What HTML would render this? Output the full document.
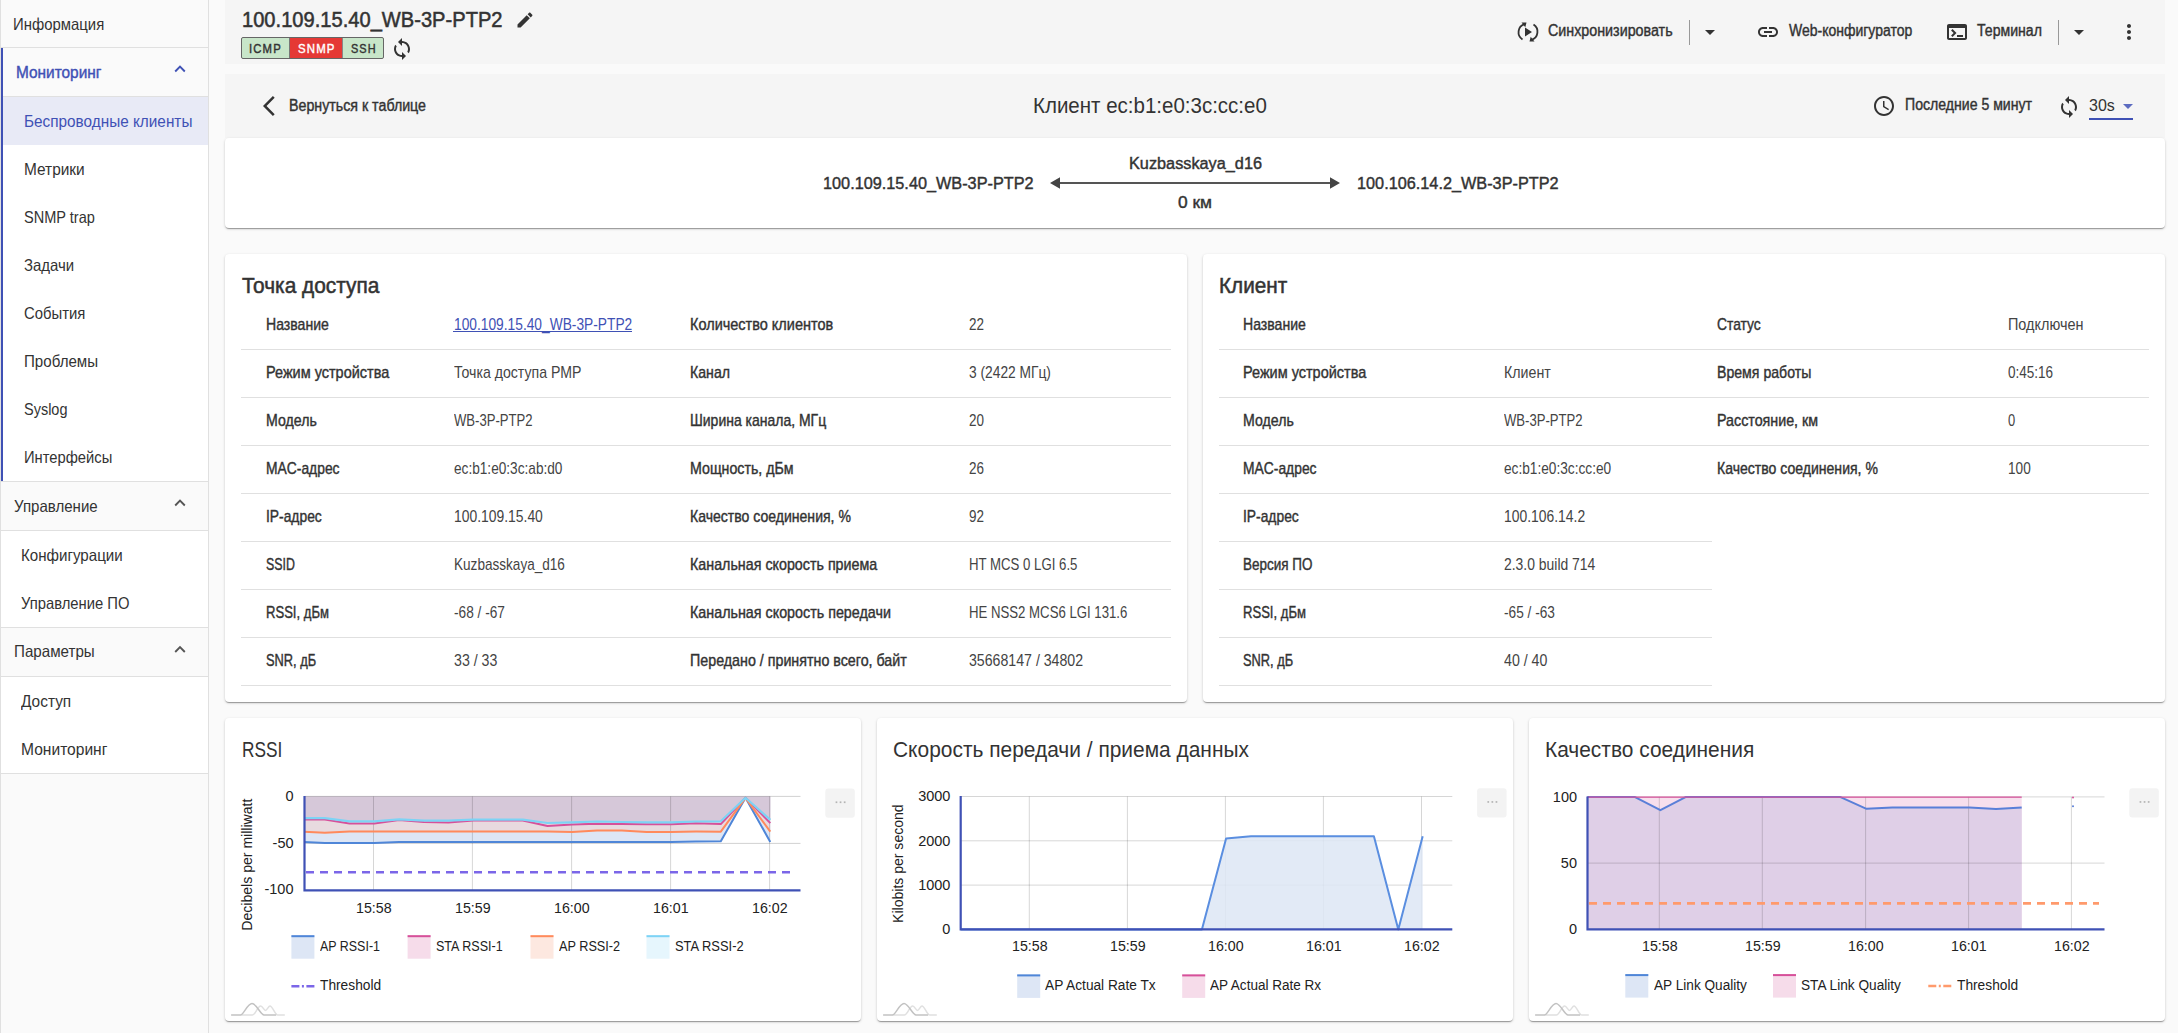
<!DOCTYPE html>
<html><head><meta charset="utf-8"><title>Client</title>
<style>
html,body{margin:0;padding:0;}
body{width:2178px;height:1033px;overflow:hidden;position:relative;background:#fafafa;font-family:"Liberation Sans",sans-serif;}
.t{position:absolute;white-space:pre;line-height:1;transform-origin:0 0;}
.card{position:absolute;background:#fff;border-radius:4px;box-shadow:0 2px 1px -1px rgba(0,0,0,.2),0 1px 1px 0 rgba(0,0,0,.14),0 1px 3px 0 rgba(0,0,0,.12);}
svg{overflow:visible}
</style></head><body>
<div style="position:absolute;left:0;top:0;width:208px;height:1033px;background:#fafafa;border-left:1px solid #e0e0e0;box-sizing:border-box;"></div>
<div style="position:absolute;left:208px;top:0;width:1px;height:1033px;background:#e0e0e0;"></div>
<div style="position:absolute;left:3px;top:97px;width:205px;height:384px;background:#fff;"></div>
<div style="position:absolute;left:1px;top:531px;width:207px;height:96px;background:#fff;"></div>
<div style="position:absolute;left:1px;top:677px;width:207px;height:96px;background:#fff;"></div>
<div style="position:absolute;left:3px;top:97px;width:205px;height:48px;background:#e8eaf6;"></div>
<div style="position:absolute;left:1px;top:47px;width:207px;height:1px;background:#e0e0e0;"></div>
<div style="position:absolute;left:1px;top:96px;width:207px;height:1px;background:#e0e0e0;"></div>
<div style="position:absolute;left:1px;top:481px;width:207px;height:1px;background:#e0e0e0;"></div>
<div style="position:absolute;left:1px;top:530px;width:207px;height:1px;background:#e0e0e0;"></div>
<div style="position:absolute;left:1px;top:627px;width:207px;height:1px;background:#e0e0e0;"></div>
<div style="position:absolute;left:1px;top:676px;width:207px;height:1px;background:#e0e0e0;"></div>
<div style="position:absolute;left:1px;top:773px;width:207px;height:1px;background:#e0e0e0;"></div>
<div style="position:absolute;left:1px;top:48px;width:2px;height:433px;background:#3f51b5;"></div>
<div style="position:absolute;left:225px;top:0;width:1940px;height:64px;background:#f5f5f5;"></div>
<div style="position:absolute;left:225px;top:74px;width:1940px;height:64px;background:#f5f5f5;"></div>
<div style="position:absolute;left:241px;top:37px;width:143px;height:22px;box-sizing:border-box;border:1px solid #666;border-radius:2px;background:#c8e6c9;overflow:hidden;"><div style="position:absolute;left:47px;top:0;width:53px;height:20px;background:#e53935;"></div><div style="position:absolute;left:47px;top:0;width:1px;height:20px;background:#777;"></div><div style="position:absolute;left:100px;top:0;width:1px;height:20px;background:#888;"></div></div>
<div style="position:absolute;left:1689px;top:20px;width:1px;height:25px;background:#999;"></div>
<div style="position:absolute;left:2058px;top:20px;width:1px;height:25px;background:#999;"></div>
<div style="position:absolute;left:2089px;top:118px;width:44px;height:2px;background:#3f51b5;"></div>
<div style="position:absolute;left:225px;top:138px;width:1940px;height:90px;background:#fff;border-radius:4px;box-shadow:0 2px 1px -1px rgba(0,0,0,.2),0 1px 1px 0 rgba(0,0,0,.14),0 1px 3px 0 rgba(0,0,0,.17);"></div>
<div style="position:absolute;left:225px;top:254px;width:962px;height:448px;background:#fff;border-radius:4px;box-shadow:0 2px 1px -1px rgba(0,0,0,.2),0 1px 1px 0 rgba(0,0,0,.14),0 1px 3px 0 rgba(0,0,0,.17);"></div>
<div style="position:absolute;left:241px;top:349px;width:930px;height:1px;background:#e0e0e0;"></div>
<div style="position:absolute;left:241px;top:397px;width:930px;height:1px;background:#e0e0e0;"></div>
<div style="position:absolute;left:241px;top:445px;width:930px;height:1px;background:#e0e0e0;"></div>
<div style="position:absolute;left:241px;top:493px;width:930px;height:1px;background:#e0e0e0;"></div>
<div style="position:absolute;left:241px;top:541px;width:930px;height:1px;background:#e0e0e0;"></div>
<div style="position:absolute;left:241px;top:589px;width:930px;height:1px;background:#e0e0e0;"></div>
<div style="position:absolute;left:241px;top:637px;width:930px;height:1px;background:#e0e0e0;"></div>
<div style="position:absolute;left:241px;top:685px;width:930px;height:1px;background:#e0e0e0;"></div>
<div style="position:absolute;left:453px;top:331px;width:179px;height:1px;background:#3f51b5;"></div>
<div style="position:absolute;left:1203px;top:254px;width:962px;height:448px;background:#fff;border-radius:4px;box-shadow:0 2px 1px -1px rgba(0,0,0,.2),0 1px 1px 0 rgba(0,0,0,.14),0 1px 3px 0 rgba(0,0,0,.17);"></div>
<div style="position:absolute;left:1219px;top:349px;width:930px;height:1px;background:#e0e0e0;"></div>
<div style="position:absolute;left:1219px;top:397px;width:930px;height:1px;background:#e0e0e0;"></div>
<div style="position:absolute;left:1219px;top:445px;width:930px;height:1px;background:#e0e0e0;"></div>
<div style="position:absolute;left:1219px;top:493px;width:930px;height:1px;background:#e0e0e0;"></div>
<div style="position:absolute;left:1219px;top:541px;width:493px;height:1px;background:#e0e0e0;"></div>
<div style="position:absolute;left:1219px;top:589px;width:493px;height:1px;background:#e0e0e0;"></div>
<div style="position:absolute;left:1219px;top:637px;width:493px;height:1px;background:#e0e0e0;"></div>
<div style="position:absolute;left:1219px;top:685px;width:493px;height:1px;background:#e0e0e0;"></div>
<div style="position:absolute;left:225px;top:718px;width:636px;height:303px;background:#fff;border-radius:4px;box-shadow:0 2px 1px -1px rgba(0,0,0,.2),0 1px 1px 0 rgba(0,0,0,.14),0 1px 3px 0 rgba(0,0,0,.17);"></div>
<div style="position:absolute;left:877px;top:718px;width:636px;height:303px;background:#fff;border-radius:4px;box-shadow:0 2px 1px -1px rgba(0,0,0,.2),0 1px 1px 0 rgba(0,0,0,.14),0 1px 3px 0 rgba(0,0,0,.17);"></div>
<div style="position:absolute;left:1529px;top:718px;width:636px;height:303px;background:#fff;border-radius:4px;box-shadow:0 2px 1px -1px rgba(0,0,0,.2),0 1px 1px 0 rgba(0,0,0,.14),0 1px 3px 0 rgba(0,0,0,.17);"></div>
<svg style="position:absolute;left:0;top:0" width="2178" height="1033" viewBox="0 0 2178 1033">
<path d="M175.2,71.5 L180,66.7 L184.8,71.5" fill="none" stroke="#3f51b5" stroke-width="1.9"/>
<path d="M175.2,505.5 L180,500.7 L184.8,505.5" fill="none" stroke="#555" stroke-width="1.9"/>
<path d="M175.2,652.0 L180,647.2 L184.8,652.0" fill="none" stroke="#555" stroke-width="1.9"/>
<g fill="none" stroke="#333" stroke-width="1.8"><path d="M1522.5,39.5 A8.5,8.5 0 0 1 1524.5,24.2"/><path d="M1533.5,24.5 A8.5,8.5 0 0 1 1531.5,39.8"/></g><path fill="#333" d="M1521.5,22.5 l5,0 l-1.2,4.8z M1534.5,41.5 l-5,0 l1.2,-4.8z M1525,27.5 l0,9 l7,-4.5z"/>
<line x1="1058" y1="183" x2="1332" y2="183" stroke="#555" stroke-width="2"/><path fill="#444" d="M1050,183 L1060,177.2 L1060,188.8z M1340,183 L1330,177.2 L1330,188.8z"/>
<defs><clipPath id="c1"><rect x="304.5" y="793.4" width="496.0" height="96.89999999999998"/></clipPath><clipPath id="c3"><rect x="1587.5" y="793" width="517" height="137"/></clipPath></defs>
<polygon points="300.0,796.4 300.0,841.7 324.8,842.9 349.5,842.9 374.3,842.9 399.0,842.0 423.8,842.0 448.5,842.0 473.3,842.0 498.0,842.0 522.8,842.0 547.5,842.0 572.3,842.0 597.0,842.0 621.8,842.0 646.5,842.0 671.3,842.0 696.0,841.5 720.8,841.2 745.5,797.8 770.3,841.9 770.3,796.4" fill="#dde6f5" clip-path="url(#c1)"/>
<polygon points="300.0,796.4 300.0,831.6 324.8,832.7 349.5,831.6 374.3,831.6 399.0,831.6 423.8,831.6 448.5,831.6 473.3,831.6 498.0,831.6 522.8,831.6 547.5,831.6 572.3,832.0 597.0,830.5 621.8,830.5 646.5,832.0 671.3,832.0 696.0,831.6 720.8,831.7 745.5,797.8 770.3,831.7 770.3,796.4" fill="#e8dadf" clip-path="url(#c1)"/>
<polygon points="300.0,796.4 300.0,818.2 324.8,818.2 349.5,821.4 374.3,821.4 399.0,819.4 423.8,820.6 448.5,820.6 473.3,819.6 498.0,819.6 522.8,819.6 547.5,823.0 572.3,822.3 597.0,821.5 621.8,822.0 646.5,822.3 671.3,822.3 696.0,821.5 720.8,821.3 745.5,797.8 770.3,819.9 770.3,796.4" fill="#d6c8d9" clip-path="url(#c1)"/>
<line x1="304.5" y1="796.4" x2="800.5" y2="796.4" stroke="rgba(0,0,0,0.18)" stroke-width="1"/>
<line x1="304.5" y1="843.4" x2="800.5" y2="843.4" stroke="rgba(0,0,0,0.18)" stroke-width="1"/>
<line x1="373.5" y1="796.4" x2="373.5" y2="890.3" stroke="rgba(0,0,0,0.16)" stroke-width="1"/>
<line x1="472.4" y1="796.4" x2="472.4" y2="890.3" stroke="rgba(0,0,0,0.16)" stroke-width="1"/>
<line x1="571.6" y1="796.4" x2="571.6" y2="890.3" stroke="rgba(0,0,0,0.16)" stroke-width="1"/>
<line x1="670.6" y1="796.4" x2="670.6" y2="890.3" stroke="rgba(0,0,0,0.16)" stroke-width="1"/>
<line x1="769.6" y1="796.4" x2="769.6" y2="890.3" stroke="rgba(0,0,0,0.16)" stroke-width="1"/>
<polyline points="300.0,841.7 324.8,842.9 349.5,842.9 374.3,842.9 399.0,842.0 423.8,842.0 448.5,842.0 473.3,842.0 498.0,842.0 522.8,842.0 547.5,842.0 572.3,842.0 597.0,842.0 621.8,842.0 646.5,842.0 671.3,842.0 696.0,841.5 720.8,841.2 745.5,797.8 770.3,841.9" fill="none" stroke="#4f86d8" stroke-width="2" stroke-linejoin="round" clip-path="url(#c1)"/>
<polyline points="300.0,819.6 324.8,819.6 349.5,823.4 374.3,823.4 399.0,819.9 423.8,822.0 448.5,822.6 473.3,820.6 498.0,820.6 522.8,820.6 547.5,826.0 572.3,824.6 597.0,823.8 621.8,824.0 646.5,824.3 671.3,824.3 696.0,823.2 720.8,824.1 745.5,797.8 770.3,823.1" fill="none" stroke="#d6509a" stroke-width="2" stroke-linejoin="round" clip-path="url(#c1)"/>
<polyline points="300.0,831.6 324.8,832.7 349.5,831.6 374.3,831.6 399.0,831.6 423.8,831.6 448.5,831.6 473.3,831.6 498.0,831.6 522.8,831.6 547.5,831.6 572.3,832.0 597.0,830.5 621.8,830.5 646.5,832.0 671.3,832.0 696.0,831.6 720.8,831.7 745.5,797.8 770.3,831.7" fill="none" stroke="#ff8a5c" stroke-width="2" stroke-linejoin="round" clip-path="url(#c1)"/>
<polyline points="300.0,818.2 324.8,818.2 349.5,821.4 374.3,821.4 399.0,819.4 423.8,820.6 448.5,820.6 473.3,819.6 498.0,819.6 522.8,819.6 547.5,823.0 572.3,822.3 597.0,821.5 621.8,822.0 646.5,822.3 671.3,822.3 696.0,821.5 720.8,821.3 745.5,797.8 770.3,819.9" fill="none" stroke="#7dd3f5" stroke-width="2.2" stroke-linejoin="round" clip-path="url(#c1)"/>
<line x1="306" y1="872.2" x2="790" y2="872.2" stroke="#7b66e8" stroke-width="2.6" stroke-dasharray="8 6"/>
<path d="M304.5,795.9 L304.5,890.3 L800.5,890.3" fill="none" stroke="#3f51b5" stroke-width="2.2"/>
<rect x="291.4" y="935.2" width="23" height="23.5" fill="#dde6f5"/><rect x="291.4" y="935.2" width="23" height="2" fill="#4f86d8"/>
<rect x="407.6" y="935.2" width="23" height="23.5" fill="#f6dcea"/><rect x="407.6" y="935.2" width="23" height="2" fill="#d6509a"/>
<rect x="530.5" y="935.2" width="23" height="23.5" fill="#fde8e0"/><rect x="530.5" y="935.2" width="23" height="2" fill="#ff8a5c"/>
<rect x="646.5" y="935.2" width="23" height="23.5" fill="#e6f6fd"/><rect x="646.5" y="935.2" width="23" height="2" fill="#7dd3f5"/>
<path d="M291.4,986.2 h8 M301.9,986.2 h2 M306.4,986.2 h8" stroke="#7b66e8" stroke-width="2.5" fill="none"/>
<rect x="825.3" y="788.6" width="29.5" height="29.2" rx="3" fill="#f3f3f3"/>
<rect x="835.6" y="801.4" width="1.7" height="1.7" fill="#b4b4b4"/>
<rect x="839.7" y="801.4" width="1.7" height="1.7" fill="#b4b4b4"/>
<rect x="843.8" y="801.4" width="1.7" height="1.7" fill="#b4b4b4"/>
<g transform="translate(0.0,0.0)" fill="none" stroke-width="1.5"><path stroke="#e0e0e0" d="M240.5,1014.9 H252.4 C255.5,1014.9 257.5,1006 260.7,1006 C262.5,1006 264,1010.4 265.4,1010.4 C267,1010.4 268.5,1006 270,1006 C272.5,1006 275,1014.9 277.5,1014.9 H284.8"/><path stroke="#c2c2c2" d="M231.1,1014.9 H240.5 C243.5,1014.9 247.5,1003.5 252,1003.5 C256.5,1003.5 260.5,1014.9 264,1014.9 H276.2"/></g>
<line x1="960.7" y1="796.5" x2="1452.3" y2="796.5" stroke="rgba(0,0,0,0.16)" stroke-width="1"/>
<line x1="960.7" y1="840.8" x2="1452.3" y2="840.8" stroke="rgba(0,0,0,0.16)" stroke-width="1"/>
<line x1="960.7" y1="885.1" x2="1452.3" y2="885.1" stroke="rgba(0,0,0,0.16)" stroke-width="1"/>
<line x1="1029.3" y1="796.5" x2="1029.3" y2="929.4" stroke="rgba(0,0,0,0.16)" stroke-width="1"/>
<line x1="1127.4" y1="796.5" x2="1127.4" y2="929.4" stroke="rgba(0,0,0,0.16)" stroke-width="1"/>
<line x1="1225.4" y1="796.5" x2="1225.4" y2="929.4" stroke="rgba(0,0,0,0.16)" stroke-width="1"/>
<line x1="1323.4" y1="796.5" x2="1323.4" y2="929.4" stroke="rgba(0,0,0,0.16)" stroke-width="1"/>
<line x1="1421.5" y1="796.5" x2="1421.5" y2="929.4" stroke="rgba(0,0,0,0.16)" stroke-width="1"/>
<polygon points="960.7,929.4 1201.9,929.4 1226.1,838.4 1251.0,836.3 1373.9,836.3 1398.3,929.4 1422.7,836.3 1422.7,929.4" fill="#dde6f5" fill-opacity="0.85"/>
<polyline points="960.7,929.4 1201.9,929.4 1226.1,838.4 1251.0,836.3 1373.9,836.3 1398.3,929.4 1422.7,836.3" fill="none" stroke="#5a8ee0" stroke-width="2" stroke-linejoin="round"/>
<path d="M960.7,796.0 L960.7,929.4 L1452.3,929.4" fill="none" stroke="#3f51b5" stroke-width="2.2"/>
<rect x="1017.2" y="974.4" width="23" height="23.5" fill="#dde6f5"/><rect x="1017.2" y="974.4" width="23" height="2" fill="#4f86d8"/>
<rect x="1182.2" y="974.4" width="23" height="23.5" fill="#f6dcea"/><rect x="1182.2" y="974.4" width="23" height="2" fill="#d6509a"/>
<rect x="1477.1" y="788.3" width="29.5" height="29.2" rx="3" fill="#f3f3f3"/>
<rect x="1487.4" y="801.1" width="1.7" height="1.7" fill="#b4b4b4"/>
<rect x="1491.5" y="801.1" width="1.7" height="1.7" fill="#b4b4b4"/>
<rect x="1495.6" y="801.1" width="1.7" height="1.7" fill="#b4b4b4"/>
<g transform="translate(652.0,0.0)" fill="none" stroke-width="1.5"><path stroke="#e0e0e0" d="M240.5,1014.9 H252.4 C255.5,1014.9 257.5,1006 260.7,1006 C262.5,1006 264,1010.4 265.4,1010.4 C267,1010.4 268.5,1006 270,1006 C272.5,1006 275,1014.9 277.5,1014.9 H284.8"/><path stroke="#c2c2c2" d="M231.1,1014.9 H240.5 C243.5,1014.9 247.5,1003.5 252,1003.5 C256.5,1003.5 260.5,1014.9 264,1014.9 H276.2"/></g>
<rect x="1587.5" y="796.9" width="434.20000000000005" height="132.5" fill="#f7dfed"/>
<polygon points="1587.5,796.9 1634.6,796.9 1660.4,810.2 1686.0,796.9 1840.0,796.9 1866.5,808.8 1892.3,807.5 1918.0,807.5 1944.0,807.5 1969.5,807.5 1996.0,809.1 2021.7,807.4 2021.7,929.4 1587.5,929.4" fill="#dfcfe7"/>
<line x1="1587.5" y1="796.9" x2="2104.5" y2="796.9" stroke="rgba(0,0,0,0.16)" stroke-width="1"/>
<line x1="1587.5" y1="863.1" x2="2104.5" y2="863.1" stroke="rgba(0,0,0,0.16)" stroke-width="1"/>
<line x1="1659.3" y1="796.9" x2="1659.3" y2="929.4" stroke="rgba(0,0,0,0.16)" stroke-width="1"/>
<line x1="1762.3" y1="796.9" x2="1762.3" y2="929.4" stroke="rgba(0,0,0,0.16)" stroke-width="1"/>
<line x1="1865.6" y1="796.9" x2="1865.6" y2="929.4" stroke="rgba(0,0,0,0.16)" stroke-width="1"/>
<line x1="1968.6" y1="796.9" x2="1968.6" y2="929.4" stroke="rgba(0,0,0,0.16)" stroke-width="1"/>
<line x1="2071.4" y1="796.9" x2="2071.4" y2="929.4" stroke="rgba(0,0,0,0.16)" stroke-width="1"/>
<polyline points="1587.5,796.9 1634.6,796.9 1660.4,810.2 1686.0,796.9 1840.0,796.9 1866.5,808.8 1892.3,807.5 1918.0,807.5 1944.0,807.5 1969.5,807.5 1996.0,809.1 2021.7,807.4" fill="none" stroke="#5a7fd8" stroke-width="2" stroke-linejoin="round"/>
<line x1="1587.5" y1="797.1" x2="2021.7" y2="797.1" stroke="#d6509a" stroke-width="1.4"/>
<line x1="1589" y1="903.4" x2="2099" y2="903.4" stroke="#ff9a6c" stroke-width="2.6" stroke-dasharray="8 6"/>
<circle cx="2073" cy="797.5" r="1" fill="#d6509a"/><circle cx="2073" cy="806.2" r="1" fill="#5a7fd8"/>
<path d="M1587.5,796.4 L1587.5,929.4 L2104.5,929.4" fill="none" stroke="#3f51b5" stroke-width="2.2"/>
<rect x="1625.3" y="974.1" width="23" height="23.5" fill="#dde6f5"/><rect x="1625.3" y="974.1" width="23" height="2" fill="#4f86d8"/>
<rect x="1773.0" y="974.1" width="23" height="23.5" fill="#f6dcea"/><rect x="1773.0" y="974.1" width="23" height="2" fill="#d6509a"/>
<path d="M1928.3,985.9 h8 M1938.8,985.9 h2 M1943.3,985.9 h8" stroke="#ff9a6c" stroke-width="2.5" fill="none"/>
<rect x="2129.3" y="788.3" width="29.5" height="29.2" rx="3" fill="#f3f3f3"/>
<rect x="2139.6" y="801.1" width="1.7" height="1.7" fill="#b4b4b4"/>
<rect x="2143.7" y="801.1" width="1.7" height="1.7" fill="#b4b4b4"/>
<rect x="2147.8" y="801.1" width="1.7" height="1.7" fill="#b4b4b4"/>
<g transform="translate(1304.0,0.0)" fill="none" stroke-width="1.5"><path stroke="#e0e0e0" d="M240.5,1014.9 H252.4 C255.5,1014.9 257.5,1006 260.7,1006 C262.5,1006 264,1010.4 265.4,1010.4 C267,1010.4 268.5,1006 270,1006 C272.5,1006 275,1014.9 277.5,1014.9 H284.8"/><path stroke="#c2c2c2" d="M231.1,1014.9 H240.5 C243.5,1014.9 247.5,1003.5 252,1003.5 C256.5,1003.5 260.5,1014.9 264,1014.9 H276.2"/></g>
</svg>
<div class="t" style="left:13.30px;top:16.03px;font-size:16.5px;color:#333;transform:scaleX(0.9028);">Информация</div>
<div class="t" style="left:15.70px;top:64.03px;font-size:16.5px;color:#3f51b5;transform:scaleX(0.9334);-webkit-text-stroke:0.42px #3f51b5;">Мониторинг</div>
<div class="t" style="left:23.50px;top:112.93px;font-size:16.5px;color:#3f51b5;transform:scaleX(0.9291);">Беспроводные клиенты</div>
<div class="t" style="left:23.50px;top:160.93px;font-size:16.5px;color:#333;transform:scaleX(0.9349);">Метрики</div>
<div class="t" style="left:23.50px;top:208.93px;font-size:16.5px;color:#333;transform:scaleX(0.8819);">SNMP trap</div>
<div class="t" style="left:23.50px;top:256.93px;font-size:16.5px;color:#333;transform:scaleX(0.9062);">Задачи</div>
<div class="t" style="left:23.50px;top:304.93px;font-size:16.5px;color:#333;transform:scaleX(0.9001);">События</div>
<div class="t" style="left:23.50px;top:352.93px;font-size:16.5px;color:#333;transform:scaleX(0.9156);">Проблемы</div>
<div class="t" style="left:23.50px;top:400.93px;font-size:16.5px;color:#333;transform:scaleX(0.8781);">Syslog</div>
<div class="t" style="left:23.50px;top:448.93px;font-size:16.5px;color:#333;transform:scaleX(0.8938);">Интерфейсы</div>
<div class="t" style="left:13.50px;top:497.73px;font-size:16.5px;color:#333;transform:scaleX(0.9124);">Управление</div>
<div class="t" style="left:21.30px;top:546.93px;font-size:16.5px;color:#333;transform:scaleX(0.9162);">Конфигурации</div>
<div class="t" style="left:21.30px;top:595.03px;font-size:16.5px;color:#333;transform:scaleX(0.8960);">Управление ПО</div>
<div class="t" style="left:13.50px;top:643.43px;font-size:16.5px;color:#333;transform:scaleX(0.9176);">Параметры</div>
<div class="t" style="left:21.30px;top:692.63px;font-size:16.5px;color:#333;transform:scaleX(0.9347);">Доступ</div>
<div class="t" style="left:21.30px;top:740.63px;font-size:16.5px;color:#333;transform:scaleX(0.9443);">Мониторинг</div>
<div class="t" style="left:241.90px;top:8.60px;font-size:22.2px;color:#333;transform:scaleX(0.9066);-webkit-text-stroke:0.53px #333;">100.109.15.40_WB-3P-PTP2</div>
<svg style="position:absolute;left:514.8px;top:10.1px;" width="20" height="20" viewBox="0 0 24 24"><path fill="#333" d="M3 17.25V21h3.75L17.81 9.94l-3.75-3.75L3 17.25zM20.71 7.04c.39-.39.39-1.02 0-1.41l-2.34-2.34c-.39-.39-1.02-.39-1.41 0l-1.83 1.83 3.75 3.75 1.83-1.83z"/></svg>
<div class="t" style="left:249.30px;top:43.24px;font-size:12.0px;color:#333;transform:scaleX(0.9435);letter-spacing:1.2px;-webkit-text-stroke:0.40px #333;">ICMP</div>
<div class="t" style="left:297.80px;top:43.24px;font-size:12.0px;color:#fff;transform:scaleX(0.9509);letter-spacing:1.2px;-webkit-text-stroke:0.40px #fff;">SNMP</div>
<div class="t" style="left:350.50px;top:43.24px;font-size:12.0px;color:#333;transform:scaleX(0.9091);letter-spacing:1.2px;-webkit-text-stroke:0.40px #333;">SSH</div>
<svg style="position:absolute;left:389.5px;top:36.5px;" width="24" height="24" viewBox="0 0 24 24"><path fill="#333" d="M12 4V1L8 5l4 4V6c3.31 0 6 2.69 6 6 0 1.010-.25 1.97-.7 2.8l1.46 1.46C19.54 15.03 20 13.57 20 12c0-4.42-3.58-8-8-8zm0 14c-3.31 0-6-2.69-6-6 0-1.01.25-1.97.7-2.8L5.24 7.74C4.46 8.97 4 10.43 4 12c0 4.42 3.58 8 8 8v3l4-4-4-4v3z"/></svg>
<div class="t" style="left:1548.40px;top:23.05px;font-size:16.0px;color:#333;transform:scaleX(0.8931);-webkit-text-stroke:0.41px #333;">Синхронизировать</div>
<svg style="position:absolute;left:1698px;top:20px;" width="24" height="24" viewBox="0 0 24 24"><path fill="#333" d="M7 10l5 5 5-5z"/></svg>
<svg style="position:absolute;left:1756.3px;top:19.8px;" width="24" height="24" viewBox="0 0 24 24"><path fill="#333" d="M3.9 12c0-1.71 1.39-3.1 3.1-3.1h4V7H7c-2.76 0-5 2.24-5 5s2.24 5 5 5h4v-1.9H7c-1.71 0-3.1-1.39-3.1-3.1zM8 13h8v-2H8v2zm9-6h-4v1.9h4c1.71 0 3.1 1.39 3.1 3.1s-1.39 3.1-3.1 3.1h-4V17h4c2.76 0 5-2.24 5-5s-2.24-5-5-5z"/></svg>
<div class="t" style="left:1789.00px;top:23.05px;font-size:16.0px;color:#333;transform:scaleX(0.8738);-webkit-text-stroke:0.41px #333;">Web-конфигуратор</div>
<svg style="position:absolute;left:1945px;top:20px;" width="24" height="24" viewBox="0 0 24 24"><path fill="#333" d="M20 4H4c-1.11 0-2 .9-2 2v12c0 1.1.89 2 2 2h16c1.1 0 2-.9 2-2V6c0-1.1-.89-2-2-2zm0 14H4V8h16v10zm-2-1h-6v-2h6v2zM7.5 17l-1.41-1.41L8.67 13l-2.59-2.59L7.5 9l4 4-4 4z"/></svg>
<div class="t" style="left:1976.70px;top:23.05px;font-size:16.0px;color:#333;transform:scaleX(0.8808);-webkit-text-stroke:0.41px #333;">Терминал</div>
<svg style="position:absolute;left:2067px;top:20px;" width="24" height="24" viewBox="0 0 24 24"><path fill="#333" d="M7 10l5 5 5-5z"/></svg>
<svg style="position:absolute;left:2117px;top:20px;" width="24" height="24" viewBox="0 0 24 24"><path fill="#333" d="M12 8c1.1 0 2-.9 2-2s-.9-2-2-2-2 .9-2 2 .9 2 2 2zm0 2c-1.1 0-2 .9-2 2s.9 2 2 2 2-.9 2-2-.9-2-2-2zm0 6c-1.1 0-2 .9-2 2s.9 2 2 2 2-.9 2-2-.9-2-2-2z"/></svg>
<svg style="position:absolute;left:263px;top:94px;" width="24" height="24" viewBox="0 0 24 24"><path fill="#333" d="M11.67 3.87L9.9 2.1 0 12l9.9 9.9 1.77-1.77L3.54 12z"/></svg>
<div class="t" style="left:289.30px;top:97.55px;font-size:16.0px;color:#333;transform:scaleX(0.8887);-webkit-text-stroke:0.41px #333;">Вернуться к таблице</div>
<div class="t" style="left:1032.50px;top:94.63px;font-size:21.7px;color:#333;transform:scaleX(0.9453);">Клиент ec:b1:e0:3c:cc:e0</div>
<svg style="position:absolute;left:1872.3px;top:93.8px;" width="24" height="24" viewBox="0 0 24 24"><path fill="#333" d="M11.99 2C6.47 2 2 6.48 2 12s4.47 10 9.99 10C17.52 22 22 17.52 22 12S17.52 2 11.99 2zM12 20c-4.42 0-8-3.58-8-8s3.58-8 8-8 8 3.58 8 8-3.58 8-8 8zm.5-13H11v6l5.25 3.15.75-1.23-4.5-2.67z"/></svg>
<div class="t" style="left:1905.00px;top:97.45px;font-size:16.0px;color:#333;transform:scaleX(0.8807);-webkit-text-stroke:0.41px #333;">Последние 5 минут</div>
<svg style="position:absolute;left:2056.7px;top:94.5px;" width="24" height="24" viewBox="0 0 24 24"><path fill="#333" d="M12 4V1L8 5l4 4V6c3.31 0 6 2.69 6 6 0 1.010-.25 1.97-.7 2.8l1.46 1.46C19.54 15.03 20 13.57 20 12c0-4.42-3.58-8-8-8zm0 14c-3.31 0-6-2.69-6-6 0-1.01.25-1.97.7-2.8L5.24 7.74C4.46 8.97 4 10.43 4 12c0 4.42 3.58 8 8 8v3l4-4-4-4v3z"/></svg>
<div class="t" style="left:2089.00px;top:97.33px;font-size:16.5px;color:#333;transform:scaleX(0.9697);">30s</div>
<svg style="position:absolute;left:2116px;top:94px;" width="24" height="24" viewBox="0 0 24 24"><path fill="#5c6bc0" d="M7 10l5 5 5-5z"/></svg>
<div class="t" style="left:1128.50px;top:155.17px;font-size:17.4px;color:#333;transform:scaleX(0.9360);-webkit-text-stroke:0.44px #333;">Kuzbasskaya_d16</div>
<div class="t" style="left:822.50px;top:175.37px;font-size:17.4px;color:#333;transform:scaleX(0.9349);-webkit-text-stroke:0.44px #333;">100.109.15.40_WB-3P-PTP2</div>
<div class="t" style="left:1357.00px;top:175.37px;font-size:17.4px;color:#333;transform:scaleX(0.9350);-webkit-text-stroke:0.44px #333;">100.106.14.2_WB-3P-PTP2</div>
<div class="t" style="left:1178.00px;top:193.87px;font-size:17.4px;color:#333;transform:scaleX(0.9970);-webkit-text-stroke:0.44px #333;">0 км</div>
<div class="t" style="left:241.60px;top:274.73px;font-size:21.7px;color:#333;transform:scaleX(0.9608);-webkit-text-stroke:0.52px #333;">Точка доступа</div>
<div class="t" style="left:265.50px;top:316.71px;font-size:15.7px;color:#333;transform:scaleX(0.8963);-webkit-text-stroke:0.40px #333;">Название</div>
<div class="t" style="left:453.50px;top:316.71px;font-size:15.7px;color:#3f51b5;transform:scaleX(0.8773);">100.109.15.40_WB-3P-PTP2</div>
<div class="t" style="left:689.60px;top:316.71px;font-size:15.7px;color:#333;transform:scaleX(0.9236);-webkit-text-stroke:0.40px #333;">Количество клиентов</div>
<div class="t" style="left:968.70px;top:316.71px;font-size:15.7px;color:#444;transform:scaleX(0.8588);">22</div>
<div class="t" style="left:265.50px;top:364.71px;font-size:15.7px;color:#333;transform:scaleX(0.9231);-webkit-text-stroke:0.40px #333;">Режим устройства</div>
<div class="t" style="left:453.50px;top:364.71px;font-size:15.7px;color:#444;transform:scaleX(0.8998);">Точка доступа PMP</div>
<div class="t" style="left:689.60px;top:364.71px;font-size:15.7px;color:#333;transform:scaleX(0.9003);-webkit-text-stroke:0.40px #333;">Канал</div>
<div class="t" style="left:968.70px;top:364.71px;font-size:15.7px;color:#444;transform:scaleX(0.8778);">3 (2422 МГц)</div>
<div class="t" style="left:265.50px;top:412.71px;font-size:15.7px;color:#333;transform:scaleX(0.9013);-webkit-text-stroke:0.40px #333;">Модель</div>
<div class="t" style="left:453.50px;top:412.71px;font-size:15.7px;color:#444;transform:scaleX(0.8355);">WB-3P-PTP2</div>
<div class="t" style="left:689.60px;top:412.71px;font-size:15.7px;color:#333;transform:scaleX(0.8911);-webkit-text-stroke:0.40px #333;">Ширина канала, МГц</div>
<div class="t" style="left:968.70px;top:412.71px;font-size:15.7px;color:#444;transform:scaleX(0.8588);">20</div>
<div class="t" style="left:265.50px;top:460.71px;font-size:15.7px;color:#333;transform:scaleX(0.8833);-webkit-text-stroke:0.40px #333;">MAC-адрес</div>
<div class="t" style="left:453.50px;top:460.71px;font-size:15.7px;color:#444;transform:scaleX(0.8693);">ec:b1:e0:3c:ab:d0</div>
<div class="t" style="left:689.60px;top:460.71px;font-size:15.7px;color:#333;transform:scaleX(0.9049);-webkit-text-stroke:0.40px #333;">Мощность, дБм</div>
<div class="t" style="left:968.70px;top:460.71px;font-size:15.7px;color:#444;transform:scaleX(0.8588);">26</div>
<div class="t" style="left:265.50px;top:508.71px;font-size:15.7px;color:#333;transform:scaleX(0.8819);-webkit-text-stroke:0.40px #333;">IP-адрес</div>
<div class="t" style="left:453.50px;top:508.71px;font-size:15.7px;color:#444;transform:scaleX(0.8854);">100.109.15.40</div>
<div class="t" style="left:689.60px;top:508.71px;font-size:15.7px;color:#333;transform:scaleX(0.8952);-webkit-text-stroke:0.40px #333;">Качество соединения, %</div>
<div class="t" style="left:968.70px;top:508.71px;font-size:15.7px;color:#444;transform:scaleX(0.8588);">92</div>
<div class="t" style="left:265.50px;top:556.71px;font-size:15.7px;color:#333;transform:scaleX(0.7883);-webkit-text-stroke:0.40px #333;">SSID</div>
<div class="t" style="left:453.50px;top:556.71px;font-size:15.7px;color:#444;transform:scaleX(0.8651);">Kuzbasskaya_d16</div>
<div class="t" style="left:689.60px;top:556.71px;font-size:15.7px;color:#333;transform:scaleX(0.9105);-webkit-text-stroke:0.40px #333;">Канальная скорость приема</div>
<div class="t" style="left:968.70px;top:556.71px;font-size:15.7px;color:#444;transform:scaleX(0.8420);">HT MCS 0 LGI 6.5</div>
<div class="t" style="left:265.50px;top:604.71px;font-size:15.7px;color:#333;transform:scaleX(0.8330);-webkit-text-stroke:0.40px #333;">RSSI, дБм</div>
<div class="t" style="left:453.50px;top:604.71px;font-size:15.7px;color:#444;transform:scaleX(0.8721);">-68 / -67</div>
<div class="t" style="left:689.60px;top:604.71px;font-size:15.7px;color:#333;transform:scaleX(0.9123);-webkit-text-stroke:0.40px #333;">Канальная скорость передачи</div>
<div class="t" style="left:968.70px;top:604.71px;font-size:15.7px;color:#444;transform:scaleX(0.8409);">HE NSS2 MCS6 LGI 131.6</div>
<div class="t" style="left:265.50px;top:652.71px;font-size:15.7px;color:#333;transform:scaleX(0.8183);-webkit-text-stroke:0.40px #333;">SNR, дБ</div>
<div class="t" style="left:453.50px;top:652.71px;font-size:15.7px;color:#444;transform:scaleX(0.9041);">33 / 33</div>
<div class="t" style="left:689.60px;top:652.71px;font-size:15.7px;color:#333;transform:scaleX(0.9096);-webkit-text-stroke:0.40px #333;">Передано / принятно всего, байт</div>
<div class="t" style="left:968.70px;top:652.71px;font-size:15.7px;color:#444;transform:scaleX(0.9019);">35668147 / 34802</div>
<div class="t" style="left:1219.40px;top:274.73px;font-size:21.7px;color:#333;transform:scaleX(0.9553);-webkit-text-stroke:0.52px #333;">Клиент</div>
<div class="t" style="left:1243.20px;top:316.71px;font-size:15.7px;color:#333;transform:scaleX(0.8963);-webkit-text-stroke:0.40px #333;">Название</div>
<div class="t" style="left:1717.40px;top:316.71px;font-size:15.7px;color:#333;transform:scaleX(0.8822);-webkit-text-stroke:0.40px #333;">Статус</div>
<div class="t" style="left:2008.10px;top:316.71px;font-size:15.7px;color:#444;transform:scaleX(0.9199);">Подключен</div>
<div class="t" style="left:1243.20px;top:364.71px;font-size:15.7px;color:#333;transform:scaleX(0.9231);-webkit-text-stroke:0.40px #333;">Режим устройства</div>
<div class="t" style="left:1503.80px;top:364.71px;font-size:15.7px;color:#444;transform:scaleX(0.9060);">Клиент</div>
<div class="t" style="left:1717.40px;top:364.71px;font-size:15.7px;color:#333;transform:scaleX(0.8998);-webkit-text-stroke:0.40px #333;">Время работы</div>
<div class="t" style="left:2008.10px;top:364.71px;font-size:15.7px;color:#444;transform:scaleX(0.8626);">0:45:16</div>
<div class="t" style="left:1243.20px;top:412.71px;font-size:15.7px;color:#333;transform:scaleX(0.9013);-webkit-text-stroke:0.40px #333;">Модель</div>
<div class="t" style="left:1503.80px;top:412.71px;font-size:15.7px;color:#444;transform:scaleX(0.8355);">WB-3P-PTP2</div>
<div class="t" style="left:1717.40px;top:412.71px;font-size:15.7px;color:#333;transform:scaleX(0.9101);-webkit-text-stroke:0.40px #333;">Расстояние, км</div>
<div class="t" style="left:2008.10px;top:412.71px;font-size:15.7px;color:#444;transform:scaleX(0.8263);">0</div>
<div class="t" style="left:1243.20px;top:460.71px;font-size:15.7px;color:#333;transform:scaleX(0.8833);-webkit-text-stroke:0.40px #333;">MAC-адрес</div>
<div class="t" style="left:1503.80px;top:460.71px;font-size:15.7px;color:#444;transform:scaleX(0.8712);">ec:b1:e0:3c:cc:e0</div>
<div class="t" style="left:1717.40px;top:460.71px;font-size:15.7px;color:#333;transform:scaleX(0.8952);-webkit-text-stroke:0.40px #333;">Качество соединения, %</div>
<div class="t" style="left:2008.10px;top:460.71px;font-size:15.7px;color:#444;transform:scaleX(0.8671);">100</div>
<div class="t" style="left:1243.20px;top:508.71px;font-size:15.7px;color:#333;transform:scaleX(0.8819);-webkit-text-stroke:0.40px #333;">IP-адрес</div>
<div class="t" style="left:1503.80px;top:508.71px;font-size:15.7px;color:#444;transform:scaleX(0.8856);">100.106.14.2</div>
<div class="t" style="left:1243.20px;top:556.71px;font-size:15.7px;color:#333;transform:scaleX(0.8587);-webkit-text-stroke:0.40px #333;">Версия ПО</div>
<div class="t" style="left:1503.80px;top:556.71px;font-size:15.7px;color:#444;transform:scaleX(0.8871);">2.3.0 build 714</div>
<div class="t" style="left:1243.20px;top:604.71px;font-size:15.7px;color:#333;transform:scaleX(0.8330);-webkit-text-stroke:0.40px #333;">RSSI, дБм</div>
<div class="t" style="left:1503.80px;top:604.71px;font-size:15.7px;color:#444;transform:scaleX(0.8721);">-65 / -63</div>
<div class="t" style="left:1243.20px;top:652.71px;font-size:15.7px;color:#333;transform:scaleX(0.8183);-webkit-text-stroke:0.40px #333;">SNR, дБ</div>
<div class="t" style="left:1503.80px;top:652.71px;font-size:15.7px;color:#444;transform:scaleX(0.9041);">40 / 40</div>
<div class="t" style="left:242.00px;top:739.25px;font-size:21.2px;color:#333;transform:scaleX(0.8141);">RSSI</div>
<div class="t" style="left:285.45px;top:788.92px;font-size:14.5px;color:#222;">0</div>
<div class="t" style="left:272.55px;top:836.32px;font-size:14.5px;color:#222;">-50</div>
<div class="t" style="left:264.46px;top:882.42px;font-size:14.5px;color:#222;">-100</div>
<div class="t" style="left:355.72px;top:900.72px;font-size:14.5px;color:#222;transform:scaleX(0.9800);">15:58</div>
<div class="t" style="left:454.62px;top:900.72px;font-size:14.5px;color:#222;transform:scaleX(0.9800);">15:59</div>
<div class="t" style="left:553.82px;top:900.72px;font-size:14.5px;color:#222;transform:scaleX(0.9800);">16:00</div>
<div class="t" style="left:652.82px;top:900.72px;font-size:14.5px;color:#222;transform:scaleX(0.9800);">16:01</div>
<div class="t" style="left:751.82px;top:900.72px;font-size:14.5px;color:#222;transform:scaleX(0.9800);">16:02</div>
<div class="t" style="left:0;top:0;font-size:14.5px;color:#222;transform:translate(239.52px,930.70px) rotate(-90deg) scaleX(0.9700);">Decibels per milliwatt</div>
<div class="t" style="left:320.00px;top:938.13px;font-size:15.2px;color:#222;transform:scaleX(0.8194);">AP RSSI-1</div>
<div class="t" style="left:436.00px;top:938.13px;font-size:15.2px;color:#222;transform:scaleX(0.8252);">STA RSSI-1</div>
<div class="t" style="left:559.10px;top:938.13px;font-size:15.2px;color:#222;transform:scaleX(0.8358);">AP RSSI-2</div>
<div class="t" style="left:674.80px;top:938.13px;font-size:15.2px;color:#222;transform:scaleX(0.8500);">STA RSSI-2</div>
<div class="t" style="left:320.00px;top:977.13px;font-size:15.2px;color:#222;transform:scaleX(0.9053);">Threshold</div>
<div class="t" style="left:893.00px;top:739.25px;font-size:21.2px;color:#333;transform:scaleX(0.9876);">Скорость передачи / приема данных</div>
<div class="t" style="left:918.14px;top:789.22px;font-size:14.5px;color:#222;">3000</div>
<div class="t" style="left:918.14px;top:833.52px;font-size:14.5px;color:#222;">2000</div>
<div class="t" style="left:918.14px;top:877.82px;font-size:14.5px;color:#222;">1000</div>
<div class="t" style="left:942.35px;top:922.12px;font-size:14.5px;color:#222;">0</div>
<div class="t" style="left:1011.52px;top:939.42px;font-size:14.5px;color:#222;transform:scaleX(0.9800);">15:58</div>
<div class="t" style="left:1109.62px;top:939.42px;font-size:14.5px;color:#222;transform:scaleX(0.9800);">15:59</div>
<div class="t" style="left:1207.62px;top:939.42px;font-size:14.5px;color:#222;transform:scaleX(0.9800);">16:00</div>
<div class="t" style="left:1305.62px;top:939.42px;font-size:14.5px;color:#222;transform:scaleX(0.9800);">16:01</div>
<div class="t" style="left:1403.72px;top:939.42px;font-size:14.5px;color:#222;transform:scaleX(0.9800);">16:02</div>
<div class="t" style="left:0;top:0;font-size:14.5px;color:#222;transform:translate(891.02px,922.90px) rotate(-90deg) scaleX(0.9671);">Kilobits per second</div>
<div class="t" style="left:1045.30px;top:976.83px;font-size:15.2px;color:#222;transform:scaleX(0.9022);">AP Actual Rate Tx</div>
<div class="t" style="left:1210.40px;top:976.83px;font-size:15.2px;color:#222;transform:scaleX(0.8914);">AP Actual Rate Rx</div>
<div class="t" style="left:1545.00px;top:739.25px;font-size:21.2px;color:#333;transform:scaleX(0.9867);">Качество соединения</div>
<div class="t" style="left:1552.82px;top:789.62px;font-size:14.5px;color:#222;">100</div>
<div class="t" style="left:1560.87px;top:855.82px;font-size:14.5px;color:#222;">50</div>
<div class="t" style="left:1568.95px;top:922.12px;font-size:14.5px;color:#222;">0</div>
<div class="t" style="left:1641.52px;top:939.42px;font-size:14.5px;color:#222;transform:scaleX(0.9800);">15:58</div>
<div class="t" style="left:1744.52px;top:939.42px;font-size:14.5px;color:#222;transform:scaleX(0.9800);">15:59</div>
<div class="t" style="left:1847.82px;top:939.42px;font-size:14.5px;color:#222;transform:scaleX(0.9800);">16:00</div>
<div class="t" style="left:1950.82px;top:939.42px;font-size:14.5px;color:#222;transform:scaleX(0.9800);">16:01</div>
<div class="t" style="left:2053.62px;top:939.42px;font-size:14.5px;color:#222;transform:scaleX(0.9800);">16:02</div>
<div class="t" style="left:1653.50px;top:976.83px;font-size:15.2px;color:#222;transform:scaleX(0.8975);">AP Link Quality</div>
<div class="t" style="left:1801.40px;top:976.83px;font-size:15.2px;color:#222;transform:scaleX(0.8991);">STA Link Quality</div>
<div class="t" style="left:1956.60px;top:976.83px;font-size:15.2px;color:#222;transform:scaleX(0.9053);">Threshold</div>
</body></html>
